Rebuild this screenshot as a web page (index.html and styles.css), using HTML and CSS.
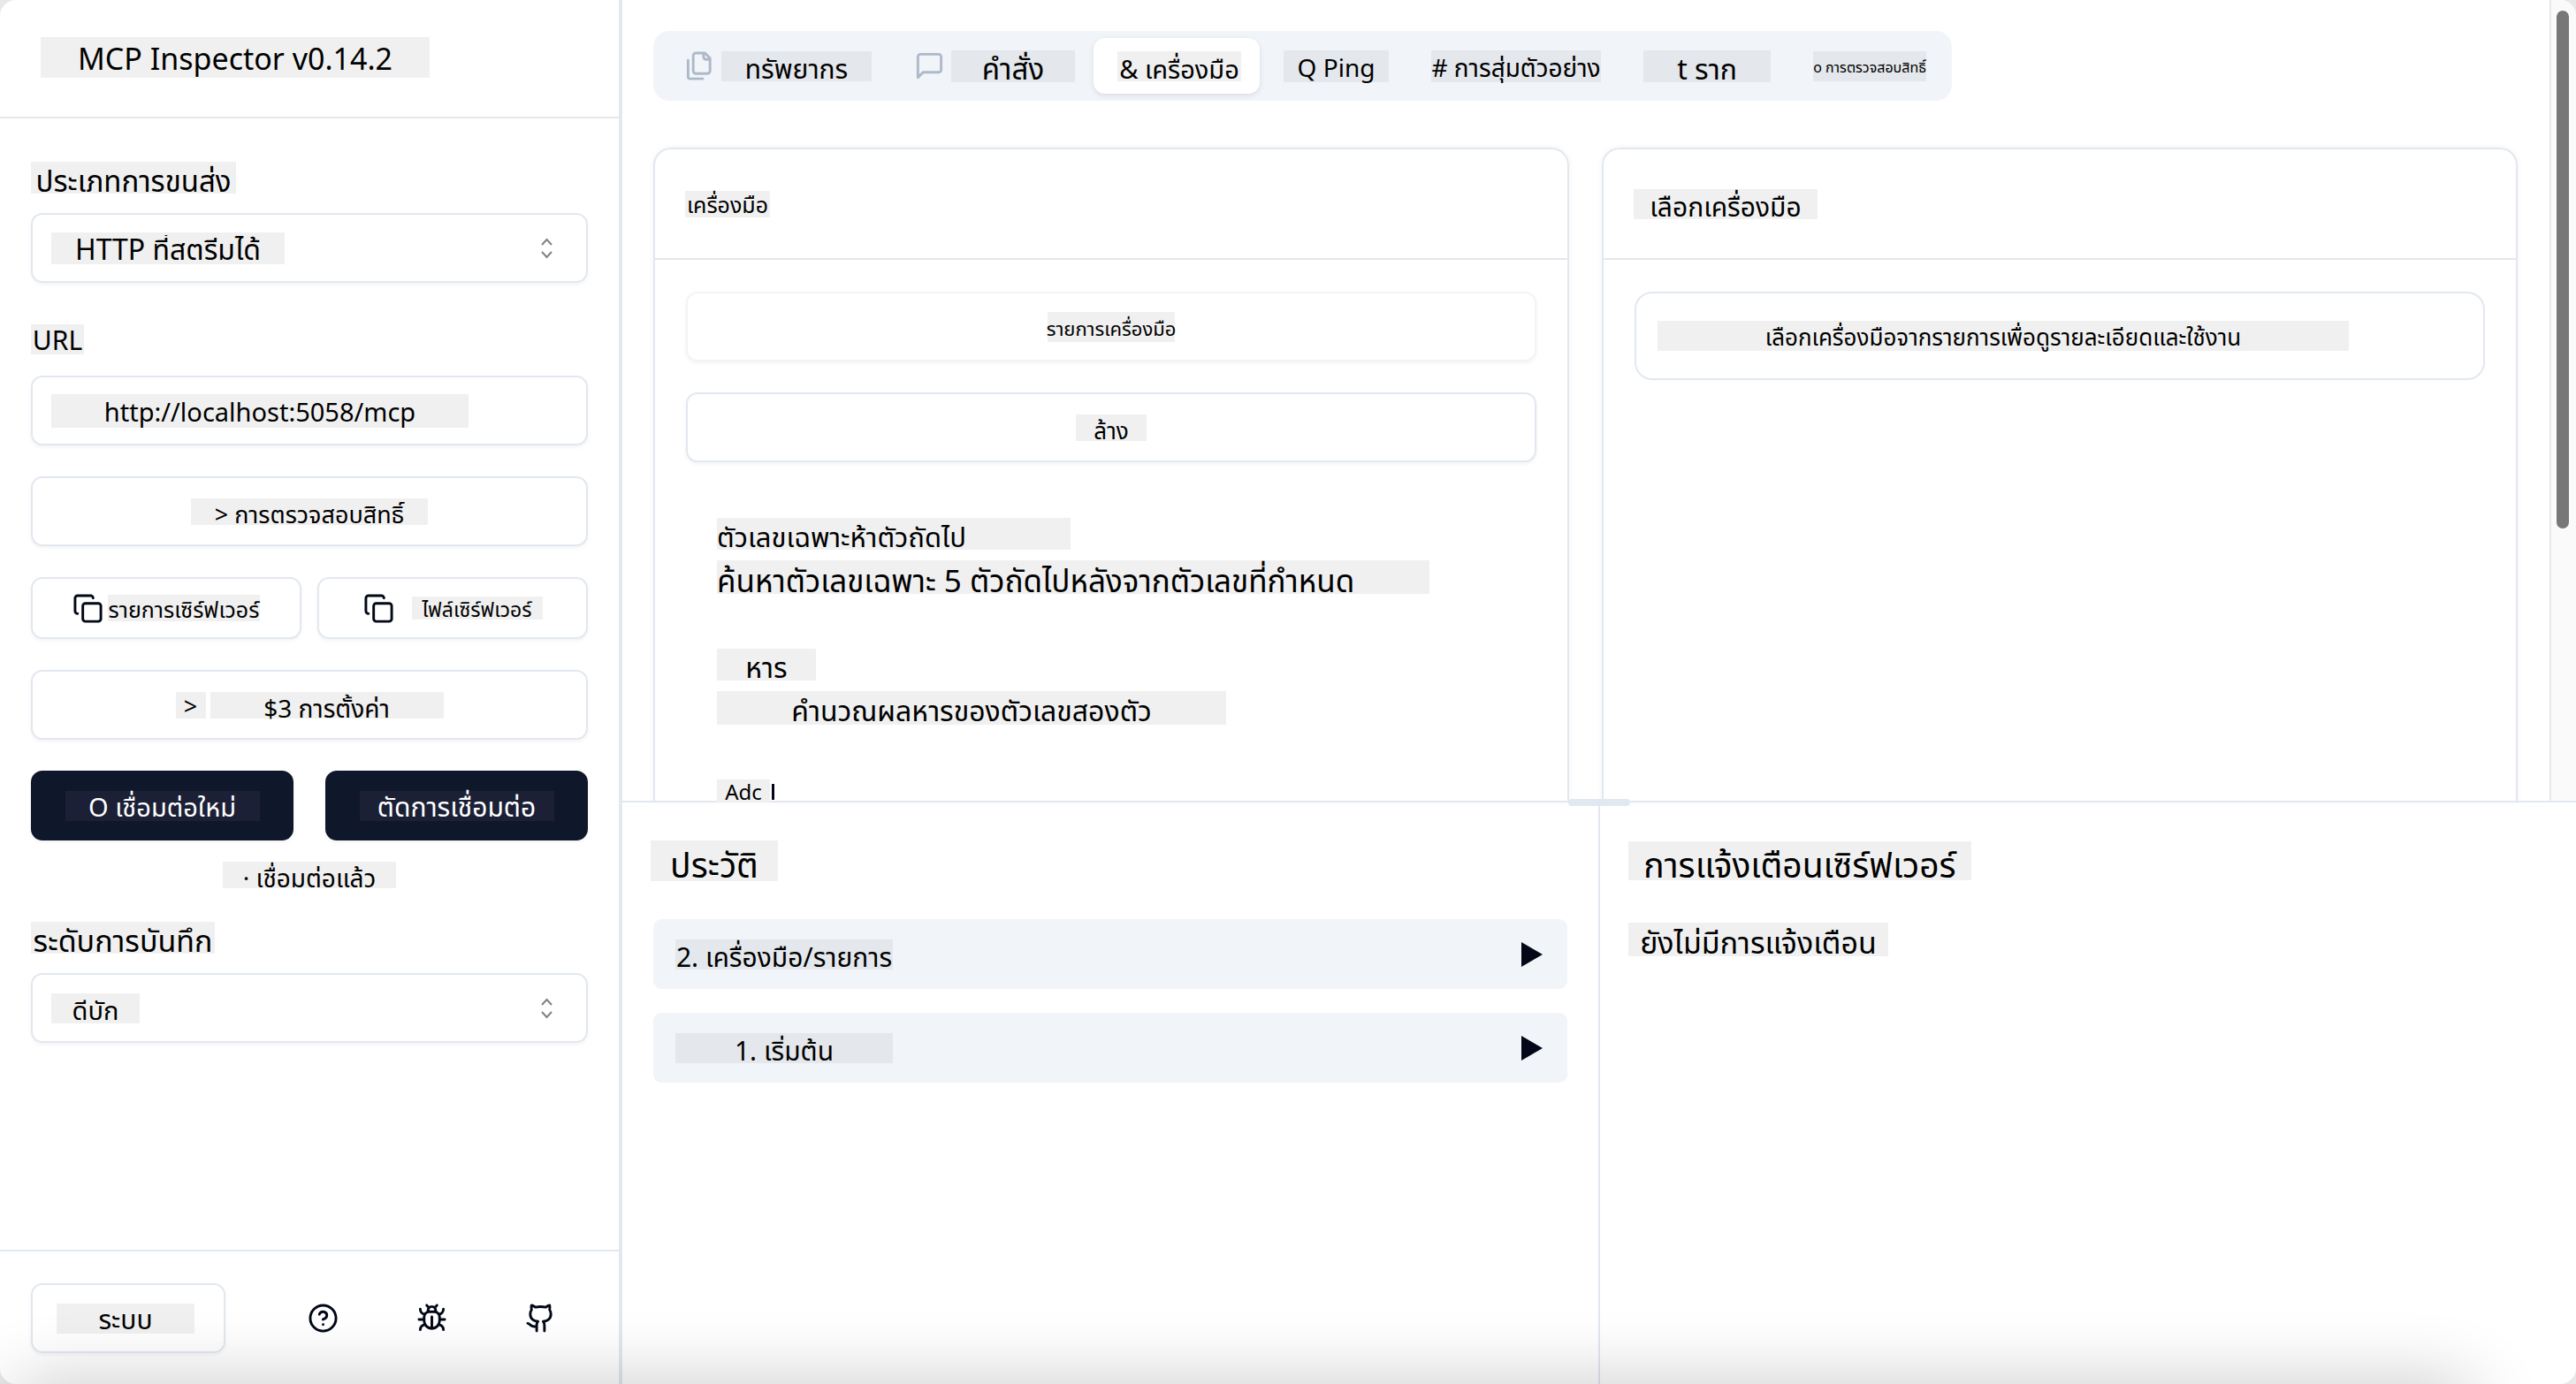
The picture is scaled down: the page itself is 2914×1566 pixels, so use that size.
FILE: index.html
```html
<!DOCTYPE html>
<html lang="th">
<head>
<meta charset="utf-8">
<title>MCP Inspector</title>
<link rel="stylesheet" href="styles.css">
</head>
<body>
<div class="app">
  <aside class="sidebar">
    <header class="sidebar-header">
      <h1 class="mark w-440 h-46 fs-34">MCP Inspector v0.14.2</h1>
    </header>

    <div class="sidebar-body">
      <div class="field field--spaced">
        <label class="field-label" for="transport"><span class="mark thai w-232 h-36 fs-33">ประเภทการขนส่ง</span></label>
        <div class="control">
          <select class="mark choice w-264 h-36 fs-32" id="transport"><option>HTTP ที่สตรีมได้</option></select>
          <svg class="chevrons" viewBox="0 0 15 24"><path d="M2 8l5.500-6 5.500 6M2 16l5.500 6 5.500-6"/></svg>
        </div>
      </div>
      <div class="field field--spaced">
        <label class="field-label" for="url"><span class="mark w-60 h-34 fs-30">URL</span></label>
        <div class="control">
          <input class="mark w-472 h-38 fs-29" id="url" type="text" value="http://localhost:5058/mcp">
        </div>
      </div>
      <button class="btn" type="button"><span class="mark thai w-268 h-30 fs-27">&gt; การตรวจสอบสิทธิ์</span></button>
      <div class="pair pair--narrow">
        <button class="btn btn--short" type="button">
          <svg class="icon" viewBox="0 0 24 24"><rect width="14" height="14" x="8" y="8" rx="2"/><path d="M4 16c-1.100 0-2-.900-2-2V4c0-1.100.900-2 2-2h10c1.100 0 2 .900 2 2"/></svg>
          <span class="mark w-172 h-30 fs-25">รายการเซิร์ฟเวอร์</span>
        </button>
        <button class="btn btn--short btn--loose" type="button">
          <svg class="icon" viewBox="0 0 24 24"><rect width="14" height="14" x="8" y="8" rx="2"/><path d="M4 16c-1.100 0-2-.900-2-2V4c0-1.100.900-2 2-2h10c1.100 0 2 .900 2 2"/></svg>
          <span class="mark w-148 h-26 fs-23">ไฟล์เซิร์ฟเวอร์</span>
        </button>
      </div>
      <button class="btn" type="button"><span class="mark w-34 h-30 fs-27">&gt;</span><span class="mark thai w-264 h-30 fs-28">$3 การตั้งค่า</span></button>
      <div class="connection">
        <div class="pair">
          <button class="btn btn--dark" type="button"><span class="mark mark--dark w-220 h-34 fs-29">O เชื่อมต่อใหม่</span></button>
          <button class="btn btn--dark" type="button"><span class="mark mark--dark w-220 h-34 fs-30">ตัดการเชื่อมต่อ</span></button>
        </div>
        <div class="status"><span class="mark thai w-196 h-30 fs-28">· เชื่อมต่อแล้ว</span></div>
      </div>
      <div class="field">
        <label class="field-label" for="level"><span class="mark thai w-208 h-36 fs-34">ระดับการบันทึก</span></label>
        <div class="control">
          <select class="mark choice w-100 h-34 fs-29" id="level"><option>ดีบัก</option></select>
          <svg class="chevrons" viewBox="0 0 15 24"><path d="M2 8l5.500-6 5.500 6M2 16l5.500 6 5.500-6"/></svg>
        </div>
      </div>
    </div>

    <footer class="sidebar-footer">
      <div class="control control--theme">
        <select class="mark choice w-156 h-34 fs-30" aria-label="Theme"><option>ระบบ</option></select>
      </div>
      <div class="links">
        <a class="link" href="#help" aria-label="Help"><svg class="icon" viewBox="0 0 24 24"><circle cx="12" cy="12" r="10"/><path d="M9.090 9a3 3 0 0 1 5.830 1c0 2-3 3-3 3M12 17h.01"/></svg></a>
        <a class="link" href="#debug" aria-label="Debug"><svg class="icon" viewBox="0 0 24 24"><path d="m8 2 1.880 1.880M14.120 3.880 16 2M9 7.130v-1a3.003 3.003 0 1 1 6 0v1M12 20c-3.300 0-6-2.700-6-6v-3a4 4 0 0 1 4-4h4a4 4 0 0 1 4 4v3c0 3.300-2.700 6-6 6M12 20v-9M6.530 9C4.600 8.800 3 7.100 3 5M6 13H2M3 21c0-2.100 1.700-3.900 3.800-4M20.970 5c0 2.100-1.600 3.800-3.500 4M22 13h-4M17.200 17c2.100.1 3.800 1.900 3.800 4"/></svg></a>
        <a class="link" href="#github" aria-label="GitHub"><svg class="icon" viewBox="0 0 24 24"><path d="M15 22v-4a4.800 4.800 0 0 0-1-3.500c3 0 6-2 6-5.500.080-1.250-.270-2.480-1-3.500.280-1.150.280-2.350 0-3.500 0 0-1 0-3 1.500-2.640-.5-5.360-.5-8 0C6 2 5 2 5 2c-.3 1.150-.3 2.350 0 3.500A5.403 5.403 0 0 0 4 9c0 3.500 3 5.500 6 5.500-.390.490-.680 1.050-.850 1.650-.170.600-.220 1.230-.150 1.850v4M9 18c-4.510 2-5-2-7-2"/></svg></a>
      </div>
    </footer>
  </aside>

  <main class="main">
    <section class="workspace">
      <div class="workspace-content">
        <nav class="tabs" role="tablist">
          <button class="tab" role="tab" type="button">
            <svg class="icon icon--muted" viewBox="0 0 24 24"><path d="M20 7h-3a2 2 0 0 1-2-2V2M9 18a2 2 0 0 1-2-2V4a2 2 0 0 1 2-2h7l4 4v10a2 2 0 0 1-2 2ZM3 7.600v12.800A1.600 1.600 0 0 0 4.600 22h9.800"/></svg>
            <span class="mark mark--tint thai w-170 h-34 fs-30">ทรัพยากร</span>
          </button>
          <button class="tab" role="tab" type="button">
            <svg class="icon icon--muted" viewBox="0 0 24 24"><path d="M21 15a2 2 0 0 1-2 2H7l-4 4V5a2 2 0 0 1 2-2h14a2 2 0 0 1 2 2z"/></svg>
            <span class="mark mark--tint thai w-140 h-36 fs-33">คำสั่ง</span>
          </button>
          <button class="tab tab--active" role="tab" type="button" aria-selected="true"><span class="mark thai w-140 h-34 fs-29">&amp; เครื่องมือ</span></button>
          <button class="tab" role="tab" type="button"><span class="mark mark--tint w-119 h-36 fs-28">Q Ping</span></button>
          <button class="tab" role="tab" type="button"><span class="mark mark--tint w-192 h-36 fs-28"># การสุ่มตัวอย่าง</span></button>
          <button class="tab" role="tab" type="button"><span class="mark mark--tint thai w-144 h-36 fs-32">t ราก</span></button>
          <button class="tab" role="tab" type="button"><span class="mark mark--tint w-128 h-34 fs-16">o การตรวจสอบสิทธิ์</span></button>
        </nav>

        <div class="cards">
          <section class="card">
            <h3 class="card-title"><span class="mark w-96 h-30 fs-25">เครื่องมือ</span></h3>
            <div class="card-body">
              <button class="btn btn--disabled" type="button" disabled><span class="mark w-144 h-34 fs-22">รายการเครื่องมือ</span></button>
              <button class="btn" type="button"><span class="mark thai w-80 h-30 fs-26">ล้าง</span></button>
              <ul class="tools">
                <li class="tool">
                  <span class="mark mark--start thai w-400 h-36 fs-31">ตัวเลขเฉพาะห้าตัวถัดไป</span>
                  <span class="mark mark--start thai w-806 h-38 fs-35">ค้นหาตัวเลขเฉพาะ 5 ตัวถัดไปหลังจากตัวเลขที่กำหนด</span>
                </li>
                <li class="tool">
                  <span class="mark thai w-112 h-36 fs-32">หาร</span>
                  <span class="mark thai w-576 h-38 fs-32">คำนวณผลหารของตัวเลขสองตัว</span>
                </li>
                <li class="tool tool--cut">
                  <span class="mark w-60 h-26 fs-24">Adc</span><span class="stem"></span>
                </li>
              </ul>
            </div>
          </section>

          <section class="card">
            <h3 class="card-title"><span class="mark thai w-208 h-34 fs-30">เลือกเครื่องมือ</span></h3>
            <div class="card-body">
              <p class="notice"><span class="mark w-782 h-34 fs-26">เลือกเครื่องมือจากรายการเพื่อดูรายละเอียดและใช้งาน</span></p>
            </div>
          </section>
        </div>
      </div>
      <div class="scrollbar"><div class="thumb"></div></div>
    </section>

    <section class="drawer">
      <div class="grip"></div>
      <div class="pane">
        <h2 class="pane-title"><span class="mark thai w-144 h-46 fs-39">ประวัติ</span></h2>
        <ul class="history">
          <li><button class="entry" type="button"><span class="mark mark--tint thai w-246 h-34 fs-30">2. เครื่องมือ/รายการ</span><svg class="caret" viewBox="0 0 24 28"><path d="M0 0l24 14L0 28z"/></svg></button></li>
          <li><button class="entry" type="button"><span class="mark mark--tint thai w-246 h-34 fs-30">1. เริ่มต้น</span><svg class="caret" viewBox="0 0 24 28"><path d="M0 0l24 14L0 28z"/></svg></button></li>
        </ul>
      </div>
      <div class="pane pane--right">
        <h2 class="pane-title"><span class="mark thai w-388 h-44 fs-39">การแจ้งเตือนเซิร์ฟเวอร์</span></h2>
        <p class="pane-text"><span class="mark thai w-294 h-38 fs-34">ยังไม่มีการแจ้งเตือน</span></p>
      </div>
    </section>
  </main>
</div>
<div class="glow"></div>
</body>
</html>
```

FILE: styles.css
```css
:root {
  --line: #e2e8f0;
  --ink: #020817;
  --navy: #0f172a;
  --soft: #f1f5f9;
  --mark: #f0f0f0;
  --tint: #e4e7eb;
}

* { box-sizing: border-box; }

html { background: #e8e8e8; }

body {
  margin: 0;
  font-family: "Noto Sans", "Noto Sans Thai", sans-serif;
  color: #000;
  overflow: hidden;
}

h1, h2, h3, p, ul { margin: 0; padding: 0; font-weight: 400; }
ul { list-style: none; }
button, input, select { font-family: inherit; color: inherit; margin: 0; }
svg { display: block; flex: none; }

.app {
  display: flex;
  height: 100vh;
  background: #fff;
  border-radius: 18px;
  overflow: hidden;
}

/* text chips */
.mark {
  display: flex;
  align-items: center;
  justify-content: center;
  background: var(--mark);
  line-height: 1;
  white-space: nowrap;
  flex: none;
  padding: 2px 0 0;
  border: 0;
  border-radius: 0;
  outline: 0;
  appearance: none;
  text-align: center;
}
.thai { padding-top: 6px; }
.choice { padding-top: 3px; }
.mark--tint { background: var(--tint); }
.mark--dark { background: #1b2036; }
.mark--start { justify-content: flex-start; }

.h-26 { height: 26px; }
.h-30 { height: 30px; }
.h-34 { height: 34px; }
.h-36 { height: 36px; }
.h-38 { height: 38px; }
.h-44 { height: 44px; }
.h-46 { height: 46px; }

.w-34 { width: 34px; }
.w-60 { width: 60px; }
.w-80 { width: 80px; }
.w-96 { width: 96px; }
.w-100 { width: 100px; }
.w-112 { width: 112px; }
.w-119 { width: 119px; }
.w-128 { width: 128px; }
.w-140 { width: 140px; }
.w-144 { width: 144px; }
.w-148 { width: 148px; }
.w-156 { width: 156px; }
.w-170 { width: 170px; }
.w-172 { width: 172px; }
.w-192 { width: 192px; }
.w-196 { width: 196px; }
.w-208 { width: 208px; }
.w-220 { width: 220px; }
.w-232 { width: 232px; }
.w-246 { width: 246px; }
.w-264 { width: 264px; }
.w-268 { width: 268px; }
.w-294 { width: 294px; }
.w-388 { width: 388px; }
.w-400 { width: 400px; }
.w-440 { width: 440px; }
.w-472 { width: 472px; }
.w-576 { width: 576px; }
.w-782 { width: 782px; }
.w-806 { width: 806px; }

.fs-16 { font-size: 16px; }
.fs-22 { font-size: 22px; }
.fs-23 { font-size: 23px; }
.fs-24 { font-size: 24px; }
.fs-25 { font-size: 25px; }
.fs-26 { font-size: 26px; }
.fs-27 { font-size: 27px; }
.fs-28 { font-size: 28px; }
.fs-29 { font-size: 29px; }
.fs-30 { font-size: 30px; }
.fs-31 { font-size: 31px; }
.fs-32 { font-size: 32px; }
.fs-33 { font-size: 33px; }
.fs-34 { font-size: 34px; }
.fs-35 { font-size: 35px; }
.fs-39 { font-size: 39px; }

.icon {
  width: 35px;
  height: 35px;
  fill: none;
  stroke: var(--ink);
  stroke-width: 2;
  stroke-linecap: round;
  stroke-linejoin: round;
}
.icon--muted { stroke: #aeb9c9; }

/* sidebar */
.sidebar {
  flex: 0 0 704px;
  display: flex;
  flex-direction: column;
  border-right: 4px solid var(--line);
}
.sidebar-header {
  padding: 42px 46px 44px;
  border-bottom: 2px solid #e5e7eb;
}
.sidebar-body {
  flex: 1;
  display: flex;
  flex-direction: column;
  gap: 35px;
  padding: 37px 35px 0;
}
.field--spaced { padding-top: 10px; }
.field-label { display: flex; height: 60px; padding-top: 2px; }

.control, .btn {
  display: flex;
  align-items: center;
  min-height: 79px;
  background: #fff;
  border: 2px solid var(--line);
  border-radius: 13px;
  box-shadow: 0 2px 4px rgba(0, 0, 0, .05);
}
.control {
  justify-content: space-between;
  padding: 0 37px 0 21px;
}
.control--theme { width: 220px; padding: 0 27px; }
.chevrons {
  width: 15px;
  height: 24px;
  fill: none;
  stroke: #808288;
  stroke-width: 2;
}
.btn {
  justify-content: center;
  gap: 5px;
  padding: 0;
  width: 100%;
}
.btn--short { min-height: 70px; }
.btn--loose { gap: 20px; }
.btn--dark {
  background: var(--navy);
  border-color: var(--navy);
  color: #fff;
}
.btn--disabled { border-color: #f3f4f6; color: #000; }
.pair { display: flex; gap: 36px; }
.pair--narrow { gap: 18px; }
.status { display: flex; justify-content: center; padding: 24px 0 1px; }

.sidebar-footer {
  display: flex;
  align-items: center;
  justify-content: space-between;
  padding: 36px 49px 35px 35px;
  border-top: 2px solid var(--line);
}
.links { display: flex; gap: 43px; }
.link {
  display: flex;
  align-items: center;
  justify-content: center;
  width: 80px;
  height: 79px;
}

/* workspace */
.main {
  flex: 1;
  min-width: 0;
  display: flex;
  flex-direction: column;
}
.workspace { flex: 1; min-height: 0; display: flex; }
.workspace-content {
  flex: 1;
  min-width: 0;
  display: flex;
  flex-direction: column;
  align-items: flex-start;
  gap: 53px;
  padding: 35px 36px 0 35px;
}
.tabs {
  display: flex;
  align-items: center;
  padding: 8px;
  background: var(--soft);
  border-radius: 18px;
}
.tab {
  display: flex;
  align-items: center;
  gap: 7px;
  height: 63px;
  padding: 0 21px 0 27px;
  background: none;
  border: 0;
  border-radius: 13px;
}
.tab--active {
  background: #fff;
  box-shadow: 0 2px 6px rgba(0, 0, 0, .1);
}
.cards {
  flex: 1;
  min-height: 0;
  width: 100%;
  display: grid;
  grid-template-columns: 1fr 1fr;
  grid-template-rows: minmax(0, 1fr);
  gap: 37px;
}
.card {
  min-width: 0;
  border: 2px solid var(--line);
  border-bottom: 0;
  border-radius: 20px 20px 0 0;
  box-shadow: 0 0 6px rgba(0, 0, 0, .06);
}
.card-title {
  display: flex;
  align-items: center;
  min-height: 125px;
  padding: 0 34px;
  border-bottom: 2px solid #e5e7eb;
}
.card-body {
  display: flex;
  flex-direction: column;
  gap: 35px;
  padding: 36px 35px 0;
}
.tools {
  display: flex;
  flex-direction: column;
  gap: 10px;
  padding-top: 2px;
}
.tool {
  display: flex;
  flex-direction: column;
  gap: 12px;
  padding: 26px 35px;
}
.tool--cut {
  flex-direction: row;
  gap: 2px;
  padding-bottom: 0;
  position: relative;
  z-index: 1;
}
.stem { width: 3px; height: 18px; margin-top: 5px; background: var(--ink); }
.notice {
  display: flex;
  align-items: center;
  min-height: 100px;
  padding: 0 24px;
  border: 2px solid var(--line);
  border-radius: 20px;
}
.scrollbar {
  width: 30px;
  padding: 12px 0 6px 6px;
  background: #fafafa;
  border-left: 2px solid #e8e8e8;
}
.thumb { width: 14px; height: 66%; border-radius: 7px; background: #777; }

/* bottom drawer */
.drawer {
  flex: 0 0 660px;
  position: relative;
  display: flex;
  border-top: 2px solid var(--line);
}
.grip {
  position: absolute;
  top: -4px;
  left: calc(50% - 35px);
  width: 70px;
  height: 8px;
  border-radius: 4px;
  background: var(--line);
}
.pane { flex: 1; min-width: 0; padding: 43px 35px 0; }
.pane--right { border-left: 2px solid var(--line); }
.pane-title {
  display: flex;
  align-items: center;
  min-height: 46px;
  margin: 0 0 43px -3px;
}
.history { display: flex; flex-direction: column; gap: 27px; }
.entry {
  display: flex;
  align-items: center;
  justify-content: space-between;
  width: 100%;
  min-height: 79px;
  padding: 0 28px 0 25px;
  background: var(--soft);
  border: 0;
  border-radius: 9px;
}
.caret { width: 24px; height: 28px; fill: var(--ink); }
.pane-text {
  display: flex;
  align-items: center;
  min-height: 46px;
  margin-left: -3px;
}

/* soft shade along the lower edge of the window */
.glow {
  position: fixed;
  left: 20px;
  right: 120px;
  bottom: -60px;
  height: 60px;
  box-shadow: 0 0 80px rgba(0, 0, 0, .24);
  pointer-events: none;
}
```
